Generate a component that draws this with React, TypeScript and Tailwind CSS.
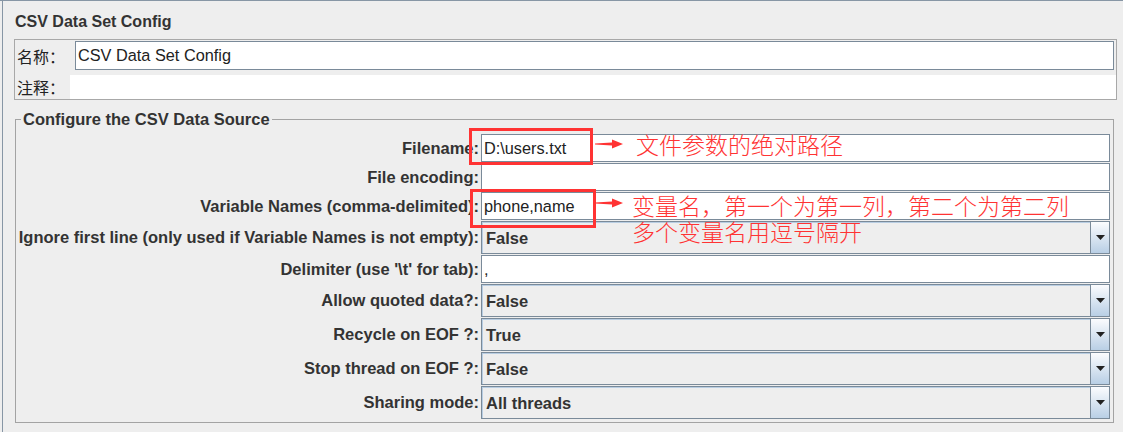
import React from 'react';

type Row = { kind: 'text' | 'combo'; label: string; value: string };

const rows: Row[] = [
  { kind: 'text', label: 'Filename:', value: 'D:\\users.txt' },
  { kind: 'text', label: 'File encoding:', value: '' },
  { kind: 'text', label: 'Variable Names (comma-delimited):', value: 'phone,name' },
  { kind: 'combo', label: 'Ignore first line (only used if Variable Names is not empty):', value: 'False' },
  { kind: 'text', label: "Delimiter (use '\\t' for tab):", value: ',' },
  { kind: 'combo', label: 'Allow quoted data?:', value: 'False' },
  { kind: 'combo', label: 'Recycle on EOF ?:', value: 'True' },
  { kind: 'combo', label: 'Stop thread on EOF ?:', value: 'False' },
  { kind: 'combo', label: 'Sharing mode:', value: 'All threads' },
];

function RedArrow({ className }: { className: string }) {
  return (
    <svg className={className} width="28" height="10" viewBox="0 0 28 10">
      <polygon points="0,4.4 17,3.4 17,0.5 28,5 17,9.5 17,6.6 0,5.6" fill="#ff3333" />
    </svg>
  );
}

function TextField({ value }: { value: string }) {
  return (
    <div className="h-[28px] flex items-center bg-white border border-[#7a8a99] pl-[2px] text-[16.3px] font-normal text-[#222] whitespace-nowrap">
      {value}
    </div>
  );
}

function Combo({ value }: { value: string }) {
  return (
    <div className="h-[33px] flex border border-[#7a8a99] bg-[#eeeeee]">
      <div className="flex-1 flex items-center pl-[3px] border-t border-l border-[#b8cde2] font-bold text-[16.5px] text-[#333]">
        {value}
      </div>
      <div className="w-[19px] flex items-center justify-center border-l border-[#7a8a99] bg-linear-to-b from-[#fbfcfe] to-[#b9cfe5]">
        <svg width="9" height="5" viewBox="0 0 9 5">
          <polygon points="0,0 9,0 4.5,5" fill="#222" />
        </svg>
      </div>
    </div>
  );
}

export default function App() {
  return (
    <div className="relative w-[1123px] h-[432px] overflow-hidden bg-[#eeeeee] border-t border-[#8796a5] font-['Liberation_Sans',Arial,sans-serif] text-[#333]">
      <div className="ml-[2px] h-full border-l border-[#8796a5]">
        {/* Title */}
        <div className="pl-[12px] pt-[12px] text-[16px] leading-[18px] font-bold">CSV Data Set Config</div>

        {/* Name / comment panel */}
        <div className="mt-[8px] ml-[11px] w-[1103px] border border-[#a8a8a8]">
          <div className="mt-[1px] h-[29px] flex">
            <div className="w-[60px] pl-[2px] flex items-center text-[16px] text-[#222] font-['Noto_Sans_CJK_SC',sans-serif]">名称：</div>
            <div className="flex-1 mr-[2px] flex items-center pl-[2px] bg-white border border-[#7a8a99] text-[16.3px] text-[#222]">
              CSV Data Set Config
            </div>
          </div>
          <div className="mt-[5px] h-[24px] flex">
            <div className="w-[55px] pl-[2px] flex items-center text-[16px] text-[#222] font-['Noto_Sans_CJK_SC',sans-serif]">注释：</div>
            <div className="flex-1 bg-white" />
          </div>
        </div>

        {/* CSV data source group */}
        <fieldset className="mt-[10px] ml-[12px] w-[1099px] border border-[#a3a3a3] pt-[6px] pb-[3px] pr-[3px]">
          <legend className="ml-[5px] px-[2px] text-[16.5px] leading-[18px] font-bold">Configure the CSV Data Source</legend>
          <div className="grid grid-cols-[465px_1fr] gap-y-px">
            {rows.map((row) => (
              <React.Fragment key={row.label}>
                <div className="flex items-center justify-end pr-[2px] text-[16.5px] font-bold whitespace-nowrap">{row.label}</div>
                {row.kind === 'text' ? <TextField value={row.value} /> : <Combo value={row.value} />}
              </React.Fragment>
            ))}
          </div>
        </fieldset>
      </div>

      {/* Annotations */}
      <div className="absolute left-[469px] top-[127px] w-[124px] h-[37px] border-[3px] border-[#ff3333]" />
      <div className="absolute left-[470px] top-[188px] w-[126px] h-[39px] border-[3px] border-[#ff3333]" />
      <RedArrow className="absolute left-[595px] top-[138px]" />
      <RedArrow className="absolute left-[595px] top-[197px]" />
      <div className="absolute left-[636px] top-[130px] text-[23px] leading-[26px] font-light text-[#ff3333] font-['Noto_Sans_CJK_SC',sans-serif] whitespace-nowrap">
        文件参数的绝对路径
      </div>
      <div className="absolute left-[632px] top-[191px] text-[23px] leading-[26px] font-light text-[#ff3333] font-['Noto_Sans_CJK_SC',sans-serif] whitespace-nowrap">
        <div>变量名，第一个为第一列，第二个为第二列</div>
        <div>多个变量名用逗号隔开</div>
      </div>
    </div>
  );
}
